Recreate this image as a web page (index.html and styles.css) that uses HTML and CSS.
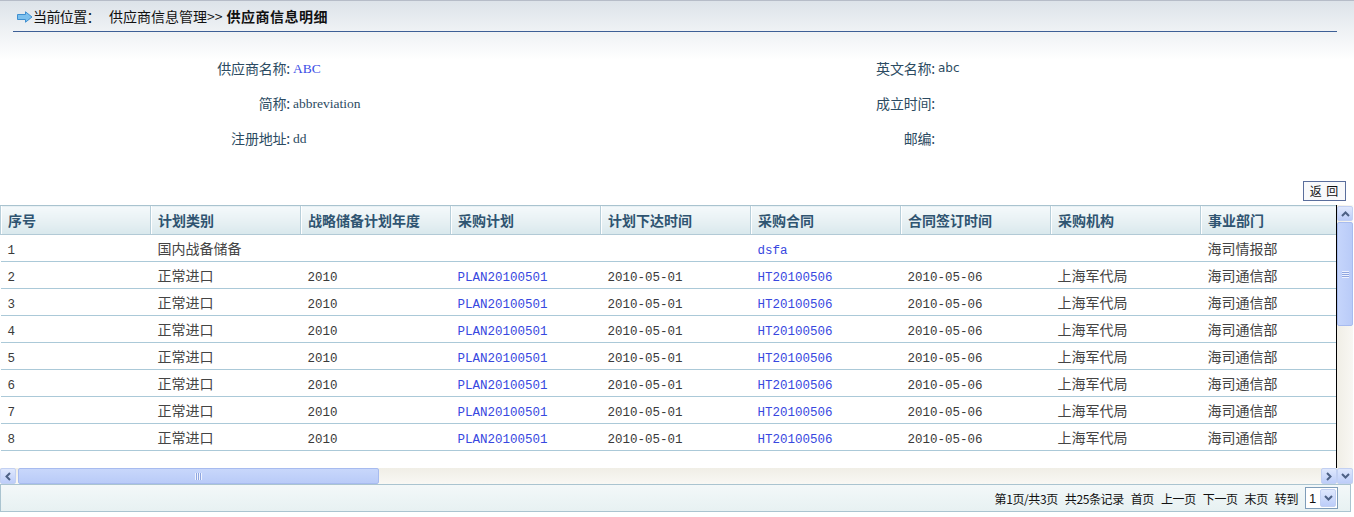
FILE: index.html
```html
<!DOCTYPE html>
<html>
<head>
<meta charset="utf-8">
<link rel="stylesheet" href="styles.css">
</head>
<body>
<div class="page">
  <div class="crumb">
    <svg class="arrow" width="16" height="12" viewBox="0 0 16 12"><path d="M0.5 3.5 H8.5 V0.8 L15 6 L8.5 11.2 V8.5 H0.5 Z" fill="#7cc0ee" stroke="#3f8fd0" stroke-width="1"/></svg>
    <span class="c-label">当前位置：</span>
    <span class="c-path">供应商信息管理&gt;&gt;</span>
    <span class="c-cur">供应商信息明细</span>
  </div>
  <div class="info">
    <div class="lab">供应商名称:</div><div class="val"><span class="blue">ABC</span></div>
    <div class="lab">英文名称:</div><div class="val sans">abc</div>
    <div class="lab">简称:</div><div class="val">abbreviation</div>
    <div class="lab">成立时间:</div><div class="val"></div>
    <div class="lab">注册地址:</div><div class="val">dd</div>
    <div class="lab">邮编:</div><div class="val"></div>
  </div>
  <div class="btnrow"><button class="back">返 回</button></div>
  <div class="gridbox">
    <div class="content">
      <table class="tbl">
        <thead>
          <tr><th>序号</th><th>计划类别</th><th>战略储备计划年度</th><th>采购计划</th><th>计划下达时间</th><th>采购合同</th><th>合同签订时间</th><th>采购机构</th><th>事业部门</th></tr>
        </thead>
        <tbody>
          <tr><td class="m">1</td><td>国内战备储备</td><td></td><td></td><td></td><td class="m lnk">dsfa</td><td></td><td></td><td>海司情报部</td></tr>
          <tr><td class="m">2</td><td>正常进口</td><td class="m">2010</td><td class="m lnk">PLAN20100501</td><td class="m">2010-05-01</td><td class="m lnk">HT20100506</td><td class="m">2010-05-06</td><td>上海军代局</td><td>海司通信部</td></tr>
          <tr><td class="m">3</td><td>正常进口</td><td class="m">2010</td><td class="m lnk">PLAN20100501</td><td class="m">2010-05-01</td><td class="m lnk">HT20100506</td><td class="m">2010-05-06</td><td>上海军代局</td><td>海司通信部</td></tr>
          <tr><td class="m">4</td><td>正常进口</td><td class="m">2010</td><td class="m lnk">PLAN20100501</td><td class="m">2010-05-01</td><td class="m lnk">HT20100506</td><td class="m">2010-05-06</td><td>上海军代局</td><td>海司通信部</td></tr>
          <tr><td class="m">5</td><td>正常进口</td><td class="m">2010</td><td class="m lnk">PLAN20100501</td><td class="m">2010-05-01</td><td class="m lnk">HT20100506</td><td class="m">2010-05-06</td><td>上海军代局</td><td>海司通信部</td></tr>
          <tr><td class="m">6</td><td>正常进口</td><td class="m">2010</td><td class="m lnk">PLAN20100501</td><td class="m">2010-05-01</td><td class="m lnk">HT20100506</td><td class="m">2010-05-06</td><td>上海军代局</td><td>海司通信部</td></tr>
          <tr><td class="m">7</td><td>正常进口</td><td class="m">2010</td><td class="m lnk">PLAN20100501</td><td class="m">2010-05-01</td><td class="m lnk">HT20100506</td><td class="m">2010-05-06</td><td>上海军代局</td><td>海司通信部</td></tr>
          <tr><td class="m">8</td><td>正常进口</td><td class="m">2010</td><td class="m lnk">PLAN20100501</td><td class="m">2010-05-01</td><td class="m lnk">HT20100506</td><td class="m">2010-05-06</td><td>上海军代局</td><td>海司通信部</td></tr>
        </tbody>
      </table>
    </div>
    <div class="vscroll">
      <div class="sbtn"><svg width="9" height="6" viewBox="0 0 9 6"><path d="M1 5 L4.5 1.5 L8 5" fill="none" stroke="#4d6185" stroke-width="2"/></svg></div>
      <div class="vthumb"><span class="grip-h"></span></div>
      <div class="vtrack"></div>
    </div>
    <div class="hscroll">
      <div class="sbtn"><svg width="6" height="9" viewBox="0 0 6 9"><path d="M5 1 L1.5 4.5 L5 8" fill="none" stroke="#4d6185" stroke-width="2"/></svg></div>
      <div class="hthumb"><span class="grip-v"></span></div>
      <div class="htrack"></div>
      <div class="sbtn"><svg width="6" height="9" viewBox="0 0 6 9"><path d="M1 1 L4.5 4.5 L1 8" fill="none" stroke="#4d6185" stroke-width="2"/></svg></div>
    </div>
    <div class="corner">
      <div class="sbtn"><svg width="9" height="6" viewBox="0 0 9 6"><path d="M1 1 L4.5 4.5 L8 1" fill="none" stroke="#4d6185" stroke-width="2"/></svg></div>
    </div>
  </div>
  <div class="pager">
    <span>第1页/共3页</span><span>共25条记录</span><span>首页</span><span>上一页</span><span>下一页</span><span>末页</span><span>转到</span>
    <div class="sel"><span class="sel-v">1</span><span class="sel-b"><svg width="9" height="6" viewBox="0 0 9 6"><path d="M1 1 L4.5 4.5 L8 1" fill="none" stroke="#4d6185" stroke-width="2"/></svg></span></div>
  </div>
</div>
</body>
</html>
```

FILE: styles.css
```css
html, body {
  margin: 0;
  padding: 0;
}
body {
  width: 1354px;
  height: 517px;
  overflow: hidden;
  background: linear-gradient(#dce2e9 0px, #eef1f4 30px, #ffffff 60px, #ffffff 100%);
  font-family: "Noto Sans CJK SC", "Liberation Sans", sans-serif;
  color: #222;
}
.page {
  width: 1354px;
  border-top: 1px solid #b6bcc8;
  box-sizing: border-box;
}
.crumb {
  height: 31px;
  display: flex;
  align-items: center;
  margin-left: 13px;
  margin-right: 17px;
  padding-left: 4px;
  border-bottom: 1px solid #3d5f96;
  font-size: 14px;
  color: #111;
  box-sizing: border-box;
}
.arrow {
  margin-top: 1px;
}
.c-label {
  margin-right: 9px;
  letter-spacing: -0.6px;
}
.c-path {
  letter-spacing: 0px;
}
.c-cur {
  font-weight: bold;
  margin-left: 4px;
  letter-spacing: 0.5px;
}
.info {
  display: grid;
  grid-template-columns: 290px 565px 80px 1fr;
  grid-auto-rows: 35px;
  margin-top: 19px;
  font-size: 14px;
  color: #2c4b62;
}
.lab {
  text-align: right;
  line-height: 35px;
  white-space: nowrap;
  justify-self: end;
  letter-spacing: -0.2px;
}
.val {
  padding-left: 3px;
  line-height: 35px;
  font-family: "Liberation Serif", "Noto Sans CJK SC", serif;
  font-size: 13.5px;
}
.val.sans {
  font-family: "DejaVu Sans", "Liberation Sans", sans-serif;
  font-size: 12px;
}
.blue {
  color: #3c4ee6;
}
.btnrow {
  display: flex;
  justify-content: flex-end;
  margin-top: 25px;
  padding-right: 8px;
  height: 20px;
}
.back {
  width: 43px;
  height: 20px;
  padding: 0;
  border: 1px solid #5a6e9c;
  background: #f8f9fb;
  font-family: "Noto Sans CJK SC", sans-serif;
  font-size: 12px;
  color: #111;
  line-height: 16px;
  letter-spacing: 1px;
}
.gridbox {
  margin-top: 4px;
  width: 1353px;
  display: grid;
  grid-template-columns: 1337px 16px;
  grid-template-rows: 263px 16px;
}
.content {
  overflow: hidden;
  border-right: 1px solid #000;
  background: #fff;
  box-sizing: border-box;
}
.tbl {
  border-collapse: collapse;
  table-layout: fixed;
  width: 1350px;
}
.tbl th, .tbl td {
  width: 150px;
  text-align: left;
  padding: 0 0 0 7px;
  white-space: nowrap;
  overflow: hidden;
  box-sizing: border-box;
}
.tbl th {
  height: 29px;
  font-size: 14px;
  font-weight: bold;
  color: #2f5471;
  background: linear-gradient(#f4f9fb, #e8f1f4 50%, #d9e8ed);
  border-top: 1px solid #a9c3cf;
  border-bottom: 1px solid #b2cad6;
  border-left: 1px solid #b8cfda;
  box-shadow: inset 1px 0 0 #ffffff;
  padding-bottom: 1px;
}
.tbl td {
  height: 27px;
  font-size: 14px;
  line-height: 20px;
  color: #444;
  border-bottom: 1px solid #abc9d8;
  padding-top: 0;
  padding-bottom: 1px;
}
.tbl td.m {
  font-family: "Liberation Mono", monospace;
  font-size: 12.5px;
  color: #3a3a3a;
  padding-top: 5px;
  padding-bottom: 0;
}
.tbl td.lnk {
  color: #3848e0;
}
.vscroll {
  display: flex;
  flex-direction: column;
  background: linear-gradient(90deg, #f0eee6, #f8f7f3);
  padding-top: 1px;
  box-sizing: border-box;
}
.sbtn {
  width: 16px;
  height: 16px;
  flex: none;
  box-sizing: border-box;
  border: 1px solid #c2d0f2;
  border-radius: 2px;
  background: linear-gradient(#dfe8fd, #bccdf9);
  display: flex;
  align-items: center;
  justify-content: center;
}
.vscroll .sbtn {
  height: 15px;
}
.vthumb {
  height: 104px;
  margin-top: 1px;
  box-sizing: border-box;
  border: 1px solid #a7bbef;
  border-radius: 2px;
  background: linear-gradient(90deg, #c5d5fb, #b9cbf8);
  display: flex;
  align-items: center;
  justify-content: center;
}
.grip-h {
  width: 7px;
  height: 7px;
  background: repeating-linear-gradient(#eef2fe 0 1px, #8fa6e0 1px 2px);
}
.vtrack {
  flex: 1;
}
.hscroll {
  display: flex;
  background: linear-gradient(#f0eee6, #f9f8f4);
}
.hthumb {
  width: 361px;
  margin-left: 2px;
  box-sizing: border-box;
  border: 1px solid #a7bbef;
  border-radius: 2px;
  background: linear-gradient(#c8d7fb, #b9cbf8);
  display: flex;
  align-items: center;
  justify-content: center;
}
.grip-v {
  width: 7px;
  height: 7px;
  background: repeating-linear-gradient(90deg, #eef2fe 0 1px, #8fa6e0 1px 2px);
}
.htrack {
  flex: 1;
}
.corner {
  display: flex;
  background: #f3f1ea;
}
.pager {
  width: 1351px;
  height: 28px;
  box-sizing: border-box;
  border: 1px solid #aac4d0;
  background: linear-gradient(#f3f8f9, #e7f1f2);
  display: flex;
  justify-content: flex-end;
  align-items: center;
  gap: 7px;
  padding-right: 12px;
  font-size: 12px;
  color: #111;
}
.pager span {
  letter-spacing: -0.4px;
}
.sel {
  display: flex;
  align-items: center;
  height: 22px;
  width: 33px;
  box-sizing: border-box;
  border: 1px solid #7f9db9;
  background: #fff;
}
.sel .sel-v {
  flex: 1;
  padding-left: 3px;
  font-family: "Liberation Sans", sans-serif;
  font-size: 13px;
}
.sel .sel-b {
  width: 16px;
  height: 18px;
  margin-right: 1px;
  box-sizing: border-box;
  border: 1px solid #c2d0f2;
  border-radius: 2px;
  background: linear-gradient(#dfe8fd, #bccdf9);
  display: flex;
  align-items: center;
  justify-content: center;
}
```
